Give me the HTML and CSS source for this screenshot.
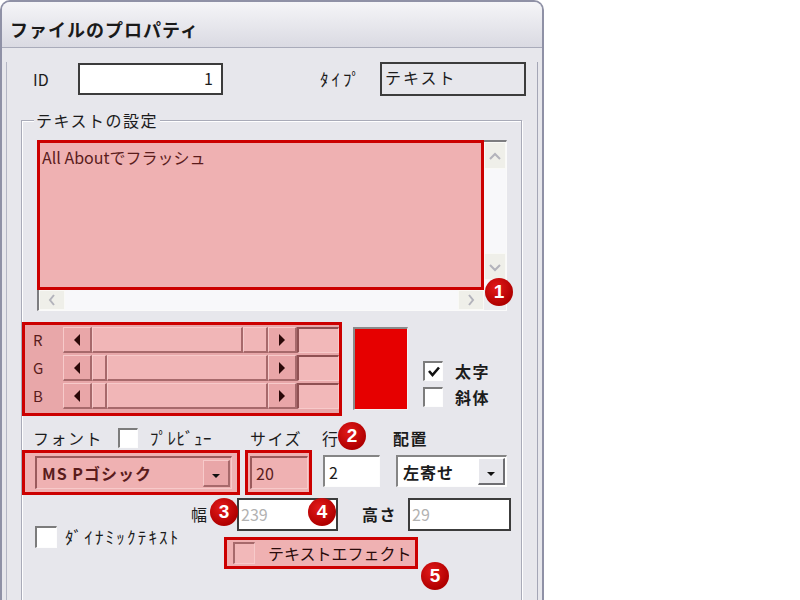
FILE: index.html
```html
<!DOCTYPE html>
<html lang="ja">
<head>
<meta charset="utf-8">
<title>ファイルのプロパティ</title>
<link rel="stylesheet" href="styles.css">
</head>
<body>
<div class="window">
  <div class="titlebar">ファイルのプロパティ</div>
  <div class="body">
    <div class="id-row">
      <span class="lbl lbl-id">ID</span>
      <div class="field field-id">1</div>
      <span class="lbl hw lbl-type">ﾀｲﾌﾟ</span>
      <div class="field field-type">テキスト</div>
    </div>

    <div class="group">
      <div class="legend">テキストの設定</div>

      <div class="textarea">
        <div class="ta-main hl">All Aboutでフラッシュ</div>
        <div class="vscroll">
          <div class="sbtn"><svg width="16" height="12" viewBox="0 0 16 12"><polyline points="3,9 8,4 13,9" fill="none" stroke="#b3b3bb" stroke-width="2"/></svg></div>
          <div class="strack"></div>
          <div class="sbtn"><svg width="16" height="12" viewBox="0 0 16 12"><polyline points="3,4 8,9 13,4" fill="none" stroke="#b3b3bb" stroke-width="2"/></svg></div>
          <div class="vgap"></div>
        </div>
        <div class="hscroll">
          <div class="sbtn"><svg width="12" height="16" viewBox="0 0 12 16"><polyline points="8,3 4,8 8,13" fill="none" stroke="#b3b3bb" stroke-width="2"/></svg></div>
          <div class="strack"></div>
          <div class="sbtn"><svg width="12" height="16" viewBox="0 0 12 16"><polyline points="4,3 8,8 4,13" fill="none" stroke="#b3b3bb" stroke-width="2"/></svg></div>
        </div>
        <div class="corner"></div>
      </div>

      <div class="color-row">
        <div class="rgb hl">
          <div class="rgb-row">
            <span class="rgb-lbl">R</span>
            <div class="slider">
              <div class="pbtn"><span class="tri-l"></span></div>
              <div class="raised seg-r"></div>
              <div class="raised seg-rest"></div>
              <div class="pbtn"><span class="tri-r"></span></div>
            </div>
            <div class="val"></div>
          </div>
          <div class="rgb-row">
            <span class="rgb-lbl">G</span>
            <div class="slider">
              <div class="pbtn"><span class="tri-l"></span></div>
              <div class="raised seg-min"></div>
              <div class="raised seg-rest"></div>
              <div class="pbtn"><span class="tri-r"></span></div>
            </div>
            <div class="val"></div>
          </div>
          <div class="rgb-row">
            <span class="rgb-lbl">B</span>
            <div class="slider">
              <div class="pbtn"><span class="tri-l"></span></div>
              <div class="raised seg-min"></div>
              <div class="raised seg-rest"></div>
              <div class="pbtn"><span class="tri-r"></span></div>
            </div>
            <div class="val"></div>
          </div>
        </div>
        <div class="swatch"></div>
        <div class="styles">
          <div class="chk-line">
            <span class="chk"><svg width="16" height="16" viewBox="0 0 16 16"><polyline points="3,7 6.5,11 13,3.5" fill="none" stroke="#111" stroke-width="2.6"/></svg></span>
            <span class="lbl bold">太字</span>
          </div>
          <div class="chk-line">
            <span class="chk"></span>
            <span class="lbl bold">斜体</span>
          </div>
        </div>
      </div>

      <div class="labels-row">
        <span class="lbl w-font">フォント</span>
        <span class="chk chk-prev"></span>
        <span class="lbl hw w-prev">ﾌﾟﾚﾋﾞｭｰ</span>
        <span class="lbl w-size">サイズ</span>
        <span class="lbl w-line">行</span>
        <span class="lbl bold">配置</span>
      </div>

      <div class="font-row">
        <div class="font-hl hl">
          <div class="combo pink">
            <span class="combo-text bold">MS Pゴシック</span>
            <span class="dd pink-dd"><span class="tri-d"></span></span>
          </div>
        </div>
        <div class="size-hl hl">
          <div class="input pink-in">20</div>
        </div>
        <div class="input white-in line-in">2</div>
        <div class="combo white-in align-in">
          <span class="combo-text bold">左寄せ</span>
          <span class="dd"><span class="tri-d"></span></span>
        </div>
      </div>

      <div class="bottom">
        <div class="dyn">
          <span class="chk chk-big"></span>
          <span class="lbl hw w-dyn">ﾀﾞｲﾅﾐｯｸﾃｷｽﾄ</span>
        </div>
        <div class="right-col">
          <div class="size-row">
            <span class="lbl w-width">幅</span>
            <div class="field field-w">239</div>
            <span class="lbl bold w-height">高さ</span>
            <div class="field field-h">29</div>
          </div>
          <div class="effect hl">
            <span class="chk chk-big chk-pink"></span>
            <span class="lbl effect-lbl">テキストエフェクト</span>
          </div>
        </div>
      </div>
    </div>
  </div>

  <span class="badge b1">1</span>
  <span class="badge b2">2</span>
  <span class="badge b3">3</span>
  <span class="badge b4">4</span>
  <span class="badge b5">5</span>
</div>
</body>
</html>
```

FILE: styles.css
```css
* { box-sizing: border-box; }
html, body { margin: 0; padding: 0; background: #fff; }
body {
  width: 800px; height: 600px; overflow: hidden;
  font-family: "Noto Sans CJK JP", "Noto Sans", sans-serif;
  color: #1c1c1c;
  font-size: 16px;
}

.window {
  position: relative;
  width: 544px; height: 600px;
  border: 2px solid #8f91a6; border-bottom: 0;
  border-radius: 10px 10px 0 0;
  background: #e7e7ec;
  overflow: hidden;
}
.titlebar {
  height: 46px;
  background: linear-gradient(#f5f5f8, #dadae2);
  border-bottom: 1px solid #a9abba;
  padding: 14px 0 0 8px;
  font-size: 18px; font-weight: 700; letter-spacing: 1px;
  line-height: 26px; color: #1a1a1a;
}
.body {
  margin: 0 4px;
  height: 560px;
  border-left: 1px solid #b4b6c4;
  border-right: 1px solid #a4a6b6;
}

.lbl { line-height: 20px; letter-spacing: 1.5px; white-space: nowrap; }
.bold { font-weight: 700; }
.hw { font-size: 17px; }

.id-row { display: flex; align-items: center; margin-top: 14px; padding-left: 26px; height: 34px; }
.lbl-id { width: 45px; letter-spacing: 0; font-size: 16px; }
.field { border: 2px solid #3c3c3c; background: #fff; line-height: 26px; }
.field-id { width: 145px; height: 32px; text-align: right; padding-right: 8px; }
.lbl-type { margin-left: 97px; width: 60px; letter-spacing: 3px; }
.field-type { width: 146px; height: 34px; background: #e7e7ec; padding-left: 3px; letter-spacing: 2px; }

.group {
  margin: 24px 0 0 14px;
  width: 501px; height: 600px;
  border: 1px solid #a9abb8;
  box-shadow: inset 1px 1px 0 #fff, 1px 1px 0 #fff;
}
.legend {
  width: fit-content;
  margin: -11px 0 0 12px; padding: 0 2px;
  background: #e7e7ec;
  line-height: 20px; letter-spacing: 1.5px;
}

.hl { border: 3px solid #cc0000; background: #efb1b2; color: #5a1c1c; }

.textarea {
  margin: 10px 0 0 15px;
  width: 470px; height: 171px;
  display: grid;
  grid-template-columns: 445px 22px;
  grid-template-rows: 148px 20px;
  border-top: 2px solid #7d7d80; border-left: 2px solid #7d7d80;
  border-right: 1px solid #fafafa; border-bottom: 1px solid #fafafa;
  background: #f7f7f9;
}
.ta-main {
  margin: -2px 0 0 -2px;
  width: 447px; height: 150px;
  padding: 4px 0 0 2px;
  line-height: 20px;
}
.vscroll { display: flex; flex-direction: column; background: #f8f8fa; }
.hscroll { display: flex; background: #f8f8fa; }
.sbtn {
  display: flex; align-items: center; justify-content: center;
  background: #efefe9; border: 1px solid #f9f9f6;
}
.vscroll .sbtn { height: 27px; }
.vgap { height: 10px; }
.hscroll .sbtn { width: 26px; }
.strack { flex: 1; }
.corner { background: #ececef; }

.color-row { display: flex; align-items: flex-start; margin-top: 11px; }
.rgb {
  width: 320px; height: 94px;
  background: #e8a7a9;
  padding-top: 2px;
  display: flex; flex-direction: column; gap: 2px;
}
.rgb-row { display: flex; height: 26px; }
.rgb-lbl { width: 38px; padding-left: 8px; line-height: 26px; font-size: 15px; color: #5a1c1c; }
.slider { width: 234px; display: flex; }
.pbtn {
  width: 29px; display: flex; align-items: center; justify-content: center;
  background: #e9a6a8;
  border-top: 1px solid #f7caca; border-left: 1px solid #f7caca;
  border-right: 2px solid #a7696b; border-bottom: 2px solid #a7696b;
}
.tri-l { width: 0; height: 0; border-right: 6px solid #2a0808; border-top: 6px solid transparent; border-bottom: 6px solid transparent; }
.tri-r { width: 0; height: 0; border-left: 6px solid #2a0808; border-top: 6px solid transparent; border-bottom: 6px solid transparent; }
.raised {
  background: #f1b6b7;
  border-top: 1px solid #f7caca; border-left: 1px solid #f7caca;
  border-right: 2px solid #a7696b; border-bottom: 2px solid #a7696b;
}
.seg-r { width: 151px; }
.seg-min { width: 15px; }
.seg-rest { flex: 1; }
.val {
  width: 42px;
  background: #f2b8b9;
  border-top: 2px solid #8f5052; border-left: 2px solid #8f5052;
  border-right: 1px solid #f7caca; border-bottom: 1px solid #f7caca;
}
.swatch {
  margin: 5px 0 0 11px;
  width: 55px; height: 83px;
  background: #e60000;
  border-top: 2px solid #8a8a8a; border-left: 2px solid #8a8a8a;
  border-right: 1px solid #f2f2f2; border-bottom: 1px solid #f2f2f2;
}
.styles { margin: 39px 0 0 15px; display: flex; flex-direction: column; gap: 6px; }
.chk-line { display: flex; align-items: center; gap: 12px; }
.chk {
  width: 20px; height: 20px; flex: none;
  display: flex; align-items: center; justify-content: center;
  background: #fff;
  border-top: 2px solid #7c7c7c; border-left: 2px solid #7c7c7c;
  border-right: 1px solid #fdfdfd; border-bottom: 1px solid #fdfdfd;
}
.chk-big { width: 22px; height: 22px; }
.chk-pink { background: #f2b8b9; border-top-color: #a7696b; border-left-color: #a7696b; border-right-color: #f7caca; border-bottom-color: #f7caca; }

.labels-row { display: flex; align-items: center; margin-top: 12px; height: 20px; padding-left: 11px; }
.w-font { width: 85px; }
.chk-prev { margin-right: 12px; }
.w-prev { width: 100px; letter-spacing: 0.5px; }
.w-size { width: 72px; }
.w-line { width: 71px; }

.font-row { display: flex; align-items: flex-start; margin-top: 2px; height: 45px; }
.font-hl { width: 218px; height: 45px; padding: 3px 0 0 10px; }
.combo { display: flex; align-items: center; justify-content: space-between; }
.pink {
  width: 197px; height: 33px;
  background: #efb1b2;
  border-top: 2px solid #9a5a5c; border-left: 2px solid #9a5a5c;
  border-right: 1px solid #f7caca; border-bottom: 1px solid #f7caca;
}
.combo-text { padding-left: 5px; letter-spacing: 1px; line-height: 20px; }
.dd {
  width: 27px; height: 27px; margin-right: 1px;
  display: flex; align-items: center; justify-content: center;
  background: #e7e7ec;
  border-top: 1px solid #fff; border-left: 1px solid #fff;
  border-right: 2px solid #6e6e72; border-bottom: 2px solid #6e6e72;
}
.pink-dd { background: #e9a6a8; border-top-color: #f7caca; border-left-color: #f7caca; border-right-color: #a7696b; border-bottom-color: #a7696b; }
.tri-d { width: 0; height: 0; border-top: 4px solid #111; border-left: 4px solid transparent; border-right: 4px solid transparent; margin-top: 6px; }
.size-hl { margin-left: 5px; width: 67px; height: 45px; padding: 3px 0 0 2px; }
.input { height: 33px; line-height: 30px; padding-left: 4px; }
.pink-in {
  width: 58px;
  background: #efb1b2;
  border-top: 2px solid #9a5a5c; border-left: 2px solid #9a5a5c;
  border-right: 1px solid #f7caca; border-bottom: 1px solid #f7caca;
}
.white-in {
  background: #fff;
  border-top: 2px solid #858585; border-left: 2px solid #858585;
  border-right: 1px solid #fdfdfd; border-bottom: 1px solid #fdfdfd;
}
.line-in { margin: 5px 0 0 11px; width: 57px; height: 32px; }
.align-in { margin: 5px 0 0 16px; width: 111px; height: 32px; }

.bottom { display: grid; grid-template-columns: 183px auto; margin-top: 2px; }
.dyn { display: flex; align-items: center; padding: 29px 0 0 13px; align-self: start; }
.w-dyn { margin-left: 8px; letter-spacing: 2.2px; }
.size-row { display: flex; align-items: center; height: 34px; }
.w-width { width: 46px; margin-left: -14px; letter-spacing: 0; }
.field-w { width: 101px; height: 33px; color: #b2b2b2; padding-left: 2px; line-height: 28px; }
.w-height { margin-left: 24px; width: 46px; }
.field-h { width: 103px; height: 33px; color: #b2b2b2; padding-left: 2px; line-height: 28px; }
.effect {
  margin: 6px 0 0 19px;
  width: 194px; height: 32px;
  display: flex; align-items: center;
  padding-left: 6px;
  color: #2a0c0c;
}
.effect-lbl { margin-left: 13px; letter-spacing: 0; }

.badge {
  position: absolute;
  width: 28px; height: 28px; border-radius: 50%;
  background: radial-gradient(circle at 40% 35%, #e31a1a, #b00000 70%);
  color: #fff;
  font-family: "Liberation Sans", "DejaVu Sans", sans-serif;
  font-weight: 700; font-size: 19px; line-height: 28px; text-align: center;
}
.b1 { left: 483px; top: 276px; }
.b2 { left: 336px; top: 420px; }
.b3 { left: 208px; top: 496px; }
.b4 { left: 306px; top: 496px; }
.b5 { left: 419px; top: 560px; }
```
